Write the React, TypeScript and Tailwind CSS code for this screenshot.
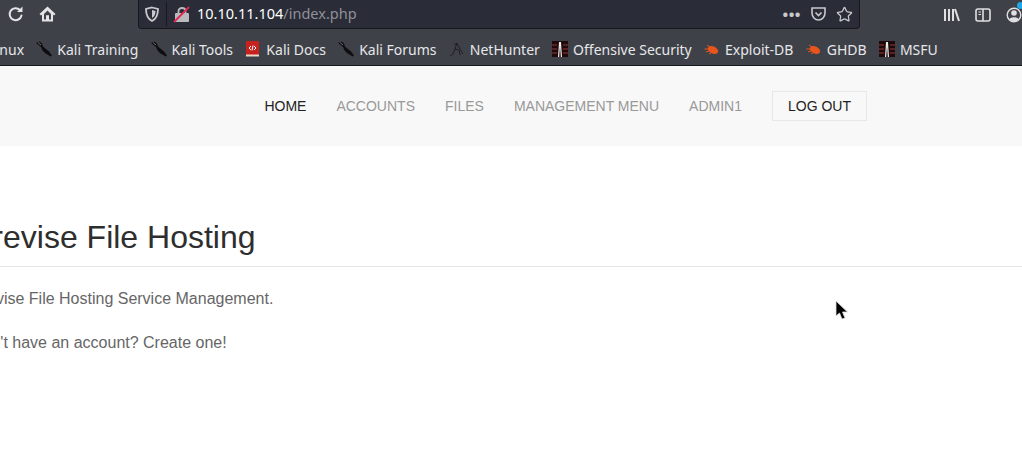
import { Star } from "lucide-react";

function Dragon() {
  return (
    <svg width="16" height="17" viewBox="0 0 16 17" className="shrink-0">
      <path d="M0 2 L3.5 0.5 L6 2.5 L7 5.5 L10 8 L13 10.5 L16 14.5 L14.5 15.5 L11.5 13.5 L9.5 12.5 L6.5 9.5 L5 6 L2.5 4 Z" fill="#0e0e10" />
      <path d="M2 1.5 L5 4" stroke="#8a8a8a" strokeWidth="0.8" />
    </svg>
  );
}

function Book() {
  return (
    <svg width="16" height="16" viewBox="0 0 16 16" className="shrink-0">
      <rect x="1" y="0" width="13" height="15" rx="1" fill="#c9211e" />
      <rect x="1" y="13.5" width="13" height="2" fill="#e8d9c8" />
      <path d="M6 5 L4 7 L6 9 M9 5 L11 7 L9 9 M8 4.5 L7 9.5" stroke="#fff" strokeWidth="1" fill="none" />
    </svg>
  );
}

function Hunter() {
  return (
    <svg width="16" height="16" viewBox="0 0 16 16" className="shrink-0">
      <path d="M5 4 L8 2 L12 10 L14 13 M8 2 L6 8 L10 9 L11 14 M6 8 L4 13 L1 15" stroke="#1d1f22" strokeWidth="1" fill="none" />
    </svg>
  );
}

function Offsec() {
  return (
    <svg width="16" height="16" viewBox="0 0 16 16" className="shrink-0">
      <rect width="16" height="16" fill="#1e0a0a" />
      <path d="M0 4 H5 M0 8 H5 M0 12 H5 M11 4 H16 M11 8 H16 M11 12 H16" stroke="#6e2a2a" strokeWidth="1.5" />
      <path d="M6 16 L7 1 H9 L10 16 H8.8 L8 5 L7.2 16 Z" fill="#eee" />
    </svg>
  );
}

function Bug() {
  return (
    <svg width="16" height="16" viewBox="0 0 16 16" className="shrink-0">
      <ellipse cx="9" cy="9" rx="5.5" ry="3.5" transform="rotate(25 9 9)" fill="#e8551c" />
      <path d="M0.5 8 L5 8 M3 4 L7 7 M5 13 L8 11 M2 11 L5 10" stroke="#e8551c" strokeWidth="1" />
    </svg>
  );
}

function Bookmark({ icon, label }: { icon: React.ReactNode; label: string }) {
  return (
    <div className="flex items-center gap-[5px]">
      {icon}
      <span className="whitespace-nowrap">{label}</span>
    </div>
  );
}

function NavLink({ label, active }: { label: string; active?: boolean }) {
  return <a className={active ? "text-[#222]" : "text-[#999]"}>{label}</a>;
}

export default function App() {
  return (
    <div className="relative h-[472px] w-[1022px] overflow-hidden bg-white font-['Liberation_Sans',sans-serif]">
      <header className="h-[66px] border-b border-[#17181c] bg-[#3f4148] font-['Noto_Sans',sans-serif] text-[#e6e7ea]">
        <div className="flex h-[29px] items-center">
          <div className="flex w-[138px] items-center gap-[15px] pl-[8px] pb-[2px]">
            <svg width="16" height="16" viewBox="0 0 16 16">
              <path d="M13.5 9.5 A6 6 0 1 1 12 4" fill="none" stroke="#e4e4e6" strokeWidth="2" strokeLinecap="round" />
              <path d="M14.5 0.5 V6 H9 Z" fill="#e4e4e6" />
            </svg>
            <svg width="17" height="16" viewBox="0 0 17 16">
              <path d="M0.5 8 L8.5 0.5 L16.5 8 L15 9.5 L14 8.6 V15.5 H3 V8.6 L2 9.5 Z" fill="#e4e4e6" />
              <path d="M5 8 L8.5 4.5 L12 8 V13.5 H10 V9.5 H7 V13.5 H5 Z" fill="#3f4148" />
              <rect x="7" y="9.5" width="3" height="4.5" fill="#e4e4e6" />
            </svg>
          </div>
          <div className="flex h-[29px] w-[722px] items-center rounded-b-[4px] border border-t-0 border-[#17181c] bg-[#2a2c37] text-[14.5px]">
            <svg width="16" height="16" viewBox="0 0 16 16" className="ml-[5px] shrink-0">
              <path d="M8 1.5 L14 3 C14 9 12 13 8 15 C4 13 2 9 2 3 Z" fill="none" stroke="#c8c9cc" strokeWidth="1.8" />
              <path d="M8 4 L11.5 5 C11.5 8.5 10.5 10.5 8 12 Z" fill="#c8c9cc" />
            </svg>
            <div className="ml-[6px] h-[24px] w-px bg-[#17181c]" />
            <svg width="17" height="17" viewBox="0 0 17 17" className="ml-[6px] shrink-0">
              <rect x="2" y="7" width="14" height="9" rx="1" fill="#b9babe" />
              <path d="M5.5 7 V5 C5.5 1 12.5 1 12.5 5 V7" fill="none" stroke="#b9babe" strokeWidth="1.8" />
              <path d="M1 16 L16 1" stroke="#e22850" strokeWidth="1.8" />
            </svg>
            <span className="ml-[7px] text-white">10.10.11.104</span>
            <span className="text-[#8f9098]">/index.php</span>
            <div className="ml-auto flex items-center gap-[9px] pr-[6px] text-[#c8c9cc]">
              <span className="text-[15px] font-bold leading-none tracking-[0.5px]">•••</span>
              <svg width="17" height="16" viewBox="0 0 17 16">
                <path d="M2 2 H15 V7 C15 11 12 14 8.5 14 C5 14 2 11 2 7 Z" fill="none" stroke="#c8c9cc" strokeWidth="1.6" />
                <path d="M5.5 6.5 L8.5 9.5 L11.5 6.5" fill="none" stroke="#c8c9cc" strokeWidth="1.6" />
              </svg>
              <Star size={17} strokeWidth={1.8} />
            </div>
          </div>
          <div className="ml-auto flex items-center gap-[15px] pr-[2px] text-[#e0e0e2]">
            <svg width="17" height="16" viewBox="0 0 17 16">
              <path d="M2 2 V14 M6 2 V14 M10 2 V14 M12 2 L16 14" stroke="#e0e0e2" strokeWidth="2" fill="none" />
            </svg>
            <svg width="16" height="14" viewBox="0 0 16 14">
              <rect x="1" y="1" width="14" height="12" rx="2" fill="none" stroke="#e0e0e2" strokeWidth="1.6" />
              <path d="M8 1 V13" stroke="#e0e0e2" strokeWidth="1.6" />
              <path d="M3.5 4 H6 M3.5 6.5 H6" stroke="#e0e0e2" strokeWidth="1" />
            </svg>
            <div className="relative w-[14px]">
              <svg width="16" height="16" viewBox="0 0 16 16">
                <circle cx="8" cy="8" r="6.8" fill="none" stroke="#e0e0e2" strokeWidth="1.4" />
                <circle cx="8" cy="6" r="2.8" fill="#e0e0e2" />
                <path d="M3.2 12.5 C4.5 9.5 11.5 9.5 12.8 12.5 C11 14.5 5 14.5 3.2 12.5 Z" fill="#e0e0e2" />
              </svg>
              <div className="absolute -top-[5px] left-[11px] h-[7px] w-[7px] rounded-full bg-[#1ea7e8]" />
            </div>
          </div>
        </div>
        <div className="-ml-[39px] flex h-[36px] items-center gap-[12.3px] pt-[4px] text-[14px]">
          <span className="whitespace-nowrap">Kali Linux</span>
          <Bookmark icon={<Dragon />} label="Kali Training" />
          <Bookmark icon={<Dragon />} label="Kali Tools" />
          <Bookmark icon={<Book />} label="Kali Docs" />
          <Bookmark icon={<Dragon />} label="Kali Forums" />
          <Bookmark icon={<Hunter />} label="NetHunter" />
          <Bookmark icon={<Offsec />} label="Offensive Security" />
          <Bookmark icon={<Bug />} label="Exploit-DB" />
          <Bookmark icon={<Bug />} label="GHDB" />
          <Bookmark icon={<Offsec />} label="MSFU" />
        </div>
      </header>

      <nav className="flex h-[80px] items-center justify-end gap-[30px] bg-[#f8f8f8] pr-[155px] text-[14px]">
        <NavLink label="HOME" active />
        <NavLink label="ACCOUNTS" />
        <NavLink label="FILES" />
        <NavLink label="MANAGEMENT MENU" />
        <NavLink label="ADMIN1" />
        <button className="flex h-[30px] items-center border border-[#e7e7e7] px-[15px] text-[#222]">LOG OUT</button>
      </nav>

      <main className="-ml-[29px]">
        <h1 className="mt-[70px] whitespace-nowrap text-[32px] leading-[42px] text-[#2e2e2e]">Previse File Hosting</h1>
        <div className="mt-[8px] h-px w-[1051px] bg-[#e5e5e5]" />
        <p className="mt-[22px] whitespace-nowrap text-[16px] leading-[20px] text-[#666]">Previse File Hosting Service Management.</p>
        <p className="mt-[24px] whitespace-nowrap text-[16px] leading-[20px] text-[#666]">Don't have an account? Create one!</p>
      </main>

      <svg width="14" height="21" viewBox="0 0 14 21" className="absolute left-[835px] top-[300px]">
        <path d="M1 1 L1 16 L4.5 13 L7 19 L10 18 L7.5 12 L12.5 12 Z" fill="#000" stroke="#ddd" strokeWidth="0.8" />
      </svg>
    </div>
  );
}
